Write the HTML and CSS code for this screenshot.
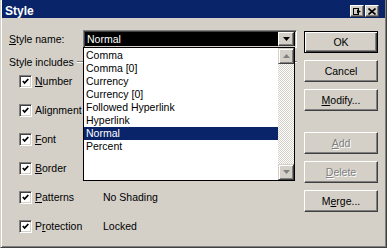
FILE: index.html
```html
<!DOCTYPE html>
<html lang="en">

<head>
	<meta charset="UTF-8">
	<meta name="viewport" content="width=device-width, initial-scale=1.0">
	<title>Style</title>

	<link rel="stylesheet" href="styles.css">
</head>

<body>
	<div class="window">
		<div class="titlebar">
			<span class="title">Style</span>
			<div class="caption-buttons">
				<span class="cap-btn">
					<svg width="9" height="7" viewBox="0 0 9 7">
						<rect x="0.5" y="0.5" width="5" height="6" fill="none" stroke="#000" />
						<path d="M4 1.5 L4 5.5 L8 3.5 Z" fill="#000" />
					</svg>
				</span>
				<span class="cap-btn">
					<svg width="8" height="7" viewBox="0 0 8 7">
						<path d="M0.5 0.5 L7.5 6.5 M7.5 0.5 L0.5 6.5" stroke="#000" stroke-width="1.6" />
					</svg>
				</span>
			</div>
		</div>

		<div class="content">
			<div class="main">
				<div class="name-row">
					<span class="name-label"><u>S</u>tyle name:</span>
					<div class="combo">
						<span class="combo-text">Normal</span>
						<span class="combo-btn">
							<svg width="7" height="4" viewBox="0 0 7 4"><path d="M0 0 H7 L3.5 4 Z" fill="#000" /></svg>
						</span>

						<div class="dropdown">
							<ul class="dropdown-list">
								<li>Comma</li>
								<li>Comma [0]</li>
								<li>Currency</li>
								<li>Currency [0]</li>
								<li>Followed Hyperlink</li>
								<li>Hyperlink</li>
								<li class="selected">Normal</li>
								<li>Percent</li>
							</ul>
							<div class="scrollbar">
								<span class="scroll-btn">
									<svg width="7" height="4" viewBox="0 0 7 4"><path d="M0 4 H7 L3.5 0 Z" fill="#808080" /></svg>
								</span>
								<span class="scroll-track"></span>
								<span class="scroll-btn">
									<svg width="7" height="4" viewBox="0 0 7 4"><path d="M0 0 H7 L3.5 4 Z" fill="#808080" /></svg>
								</span>
							</div>
						</div>
					</div>
				</div>

				<div class="includes">
					<div class="includes-title">
						<span>Style includes</span>
						<span class="group-line"></span>
					</div>
					<div class="includes-rows">
						<div class="include-row">
							<span class="checkbox"><svg width="7" height="7" viewBox="0 0 7 7"><path d="M0.8 3 L2.6 5 L6.3 1" fill="none" stroke="#000" stroke-width="1.8" /></svg></span>
							<span><u>N</u>umber</span>
							<span></span>
						</div>
						<div class="include-row">
							<span class="checkbox"><svg width="7" height="7" viewBox="0 0 7 7"><path d="M0.8 3 L2.6 5 L6.3 1" fill="none" stroke="#000" stroke-width="1.8" /></svg></span>
							<span>Alignment</span>
							<span></span>
						</div>
						<div class="include-row">
							<span class="checkbox"><svg width="7" height="7" viewBox="0 0 7 7"><path d="M0.8 3 L2.6 5 L6.3 1" fill="none" stroke="#000" stroke-width="1.8" /></svg></span>
							<span><u>F</u>ont</span>
							<span></span>
						</div>
						<div class="include-row">
							<span class="checkbox"><svg width="7" height="7" viewBox="0 0 7 7"><path d="M0.8 3 L2.6 5 L6.3 1" fill="none" stroke="#000" stroke-width="1.8" /></svg></span>
							<span><u>B</u>order</span>
							<span></span>
						</div>
						<div class="include-row">
							<span class="checkbox"><svg width="7" height="7" viewBox="0 0 7 7"><path d="M0.8 3 L2.6 5 L6.3 1" fill="none" stroke="#000" stroke-width="1.8" /></svg></span>
							<span><u>P</u>atterns</span>
							<span>No Shading</span>
						</div>
						<div class="include-row">
							<span class="checkbox"><svg width="7" height="7" viewBox="0 0 7 7"><path d="M0.8 3 L2.6 5 L6.3 1" fill="none" stroke="#000" stroke-width="1.8" /></svg></span>
							<span>P<u>r</u>otection</span>
							<span>Locked</span>
						</div>
					</div>
				</div>
			</div>

			<div class="actions">
				<button class="btn btn-default" type="button">OK</button>
				<button class="btn" type="button">Cancel</button>
				<button class="btn" type="button"><u>M</u>odify...</button>
				<button class="btn btn-disabled btn-add" type="button"><u>A</u>dd</button>
				<button class="btn btn-disabled" type="button"><u>D</u>elete</button>
				<button class="btn" type="button">M<u>e</u>rge...</button>
			</div>
		</div>
	</div>
</body>

</html>
```

FILE: styles.css
```css
body {
	margin: 0;
	padding: 0;
	overflow: hidden;
	font-family: "Liberation Sans", Arial, sans-serif;
	font-size: 10.5px;
	color: #000;
	background-color: #d4d0c8;
}

.window {
	width: 387px;
	height: 248px;
	box-sizing: border-box;
	background-color: #d4d0c8;
	border-left: 1px solid #d4d0c8;
	border-right: 1px solid #404040;
	border-bottom: 1px solid #404040;
	box-shadow: inset 1px 0 #fff, inset -1px -1px #808080;
	padding: 0 1px 1px 1px;
}

.titlebar {
	height: 18px;
	box-sizing: border-box;
	padding: 4px 6px 0 3px;
	display: flex;
	align-items: center;
	justify-content: space-between;
	background-color: #0a246a;
}

.title {
	color: #fff;
	font-weight: bold;
	font-size: 12px;
}

.caption-buttons {
	display: flex;
	gap: 1px;
}

.cap-btn {
	width: 14px;
	height: 12px;
	box-sizing: border-box;
	display: flex;
	justify-content: center;
	align-items: center;
	background-color: #d4d0c8;
	border: 1px solid;
	border-color: #fff #404040 #404040 #fff;
	box-shadow: inset -1px -1px #808080;
}

.content {
	display: flex;
	gap: 7px;
	padding: 12px 0 0 7px;
}

.main {
	width: 288px;
}

.name-row {
	display: flex;
	align-items: center;
}

.name-label {
	width: 74px;
}

.combo {
	position: relative;
	width: 214px;
	height: 18px;
	box-sizing: border-box;
	display: flex;
	border: 1px solid;
	border-color: #808080 #fff #fff #808080;
	box-shadow: inset 1px 1px #404040, inset -1px -1px #d4d0c8;
	padding: 1px 2px 1px 1px;
	background-color: #000;
}

.combo-text {
	flex: 1;
	color: #fff;
	line-height: 14px;
	padding-left: 2px;
}

.combo-btn {
	width: 16px;
	box-sizing: border-box;
	display: flex;
	justify-content: center;
	align-items: center;
	background-color: #d4d0c8;
	border: 1px solid;
	border-color: #fff #404040 #404040 #fff;
	box-shadow: inset -1px -1px #808080;
}

.dropdown {
	position: absolute;
	top: 100%;
	left: -1px;
	width: 212px;
	height: 134px;
	box-sizing: border-box;
	border: 1px solid #000;
	background-color: #fff;
	display: flex;
}

.dropdown-list {
	flex: 1;
	list-style: none;
	margin: 0;
	padding: 1px 0 0 0;
}

.dropdown-list li {
	height: 13px;
	line-height: 13px;
	padding-left: 2px;
}

.dropdown-list .selected {
	background-color: #0a246a;
	color: #fff;
}

.scrollbar {
	width: 16px;
	display: flex;
	flex-direction: column;
}

.scroll-btn {
	height: 16px;
	box-sizing: border-box;
	display: flex;
	justify-content: center;
	align-items: center;
	background-color: #d4d0c8;
	border: 1px solid;
	border-color: #d4d0c8 #404040 #404040 #d4d0c8;
	box-shadow: inset 1px 1px #fff, inset -1px -1px #808080;
}

.scroll-track {
	flex: 1;
	background: repeating-conic-gradient(#fff 0 25%, #d4d0c8 0 50%) 0 0 / 2px 2px;
}

.includes {
	margin-top: 7px;
}

.includes-title {
	display: flex;
	align-items: center;
	gap: 3px;
	line-height: 14px;
}

.group-line {
	flex: 1;
	height: 0;
	border-top: 1px solid #808080;
	border-bottom: 1px solid #fff;
}

.includes-rows {
	display: flex;
	flex-direction: column;
	gap: 16px;
	padding: 6px 0 0 10px;
}

.include-row {
	display: grid;
	grid-template-columns: 13px 65px auto;
	column-gap: 3px;
	align-items: center;
	height: 13px;
	line-height: 13px;
}

.checkbox {
	width: 13px;
	height: 13px;
	box-sizing: border-box;
	display: flex;
	justify-content: center;
	align-items: center;
	background-color: #fff;
	border: 1px solid;
	border-color: #808080 #fff #fff #808080;
	box-shadow: inset 1px 1px #404040, inset -1px -1px #d4d0c8;
}

.actions {
	display: flex;
	flex-direction: column;
	gap: 7px;
	width: 74px;
	padding-top: 1px;
}

.btn {
	height: 22px;
	padding: 0;
	font-family: inherit;
	font-size: 10.5px;
	color: #000;
	background-color: #d4d0c8;
	border: 1px solid;
	border-color: #fff #404040 #404040 #fff;
	box-shadow: inset -1px -1px #808080;
}

.btn-default {
	border-color: #000;
	box-shadow: inset 1px 1px #fff, inset -1px -1px #404040, inset -2px -2px #808080;
}

.btn-disabled {
	color: #808080;
	text-shadow: 1px 1px #fff;
}

.btn-add {
	margin-top: 14px;
}
```
